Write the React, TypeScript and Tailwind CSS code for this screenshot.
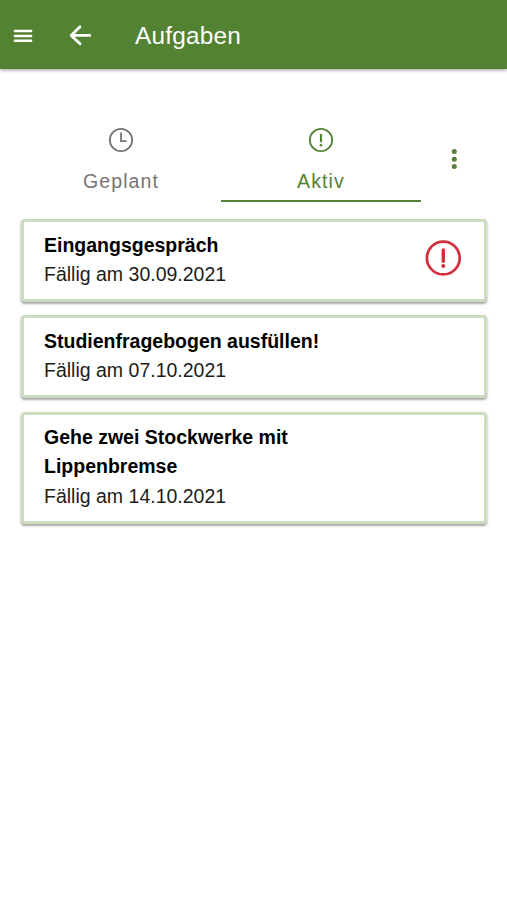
import React from 'react';
import clsx from 'clsx';

interface Task {
  id: number;
  title: string;
  due: string;
  urgent?: boolean;
}

const tasks: Task[] = [
  { id: 1, title: 'Eingangsgespräch', due: '30.09.2021', urgent: true },
  { id: 2, title: 'Studienfragebogen ausfüllen!', due: '07.10.2021' },
  { id: 3, title: 'Gehe zwei Stockwerke mit Lippenbremse', due: '14.10.2021' },
];

const MenuIcon = () => (
  <svg className="w-5 h-5" viewBox="0 0 20 20" stroke="currentColor" strokeWidth="2.5" strokeLinecap="round">
    <path d="M1.9 5.1h16.2M1.9 9.9h16.2M1.9 14.7h16.2" />
  </svg>
);

const BackIcon = () => (
  <svg className="w-6 h-6" viewBox="0 0 24 24" fill="none" stroke="currentColor" strokeWidth="2.8" strokeLinecap="round" strokeLinejoin="round">
    <path d="M21.8 11.4H3.2M12 2.8 3.2 11.4l8.8 8.4" />
  </svg>
);

const ClockIcon = () => (
  <svg className="w-[26px] h-[26px]" viewBox="0 0 26 26" fill="none" stroke="currentColor" strokeWidth="1.8">
    <circle cx="13" cy="13" r="11.2" />
    <path d="M13 5.4v8.8h5.7" />
  </svg>
);

const AlertIcon = () => (
  <svg className="w-[26px] h-[26px]" viewBox="0 0 26 26" fill="none" stroke="currentColor" strokeWidth="1.8">
    <circle cx="13" cy="13" r="11.2" />
    <path d="M13 7v8.2" strokeWidth="2.2" />
    <circle cx="13" cy="18.2" r="1.3" fill="currentColor" stroke="none" />
  </svg>
);

const UrgentIcon = () => (
  <svg className="w-9 h-9 text-[#d3303c]" viewBox="0 0 36 36" fill="none" stroke="currentColor" strokeWidth="2.7">
    <circle cx="18.3" cy="18" r="16.4" />
    <path d="M18.3 9.9v11.3" strokeWidth="3.4" strokeLinecap="round" />
    <circle cx="18.3" cy="26" r="2" fill="currentColor" stroke="none" />
  </svg>
);

const MoreIcon = () => (
  <svg className="w-5 h-5" viewBox="0 0 20 20" fill="currentColor">
    <circle cx="10.3" cy="2.6" r="2.5" />
    <circle cx="10.3" cy="10.2" r="2.5" />
    <circle cx="10.3" cy="17.5" r="2.5" />
  </svg>
);

interface TabProps {
  label: string;
  icon: React.ReactNode;
  active?: boolean;
}

const Tab: React.FC<TabProps> = ({ label, icon, active = false }) => (
  <button
    className={clsx(
      'w-[200px] h-[87px] pt-3 flex flex-col items-center border-b-2',
      active ? 'text-[#528233] border-[#528233]' : 'text-[#757575] border-transparent'
    )}
  >
    {icon}
    <span className="mt-[13px] text-[19.5px] leading-[30px] tracking-[1.1px]">{label}</span>
  </button>
);

const TaskCard: React.FC<{ task: Task }> = ({ task }) => (
  <div className="flex justify-between bg-white border-[3px] border-[#cbdcc1] rounded-[4px] pl-5 pr-[23px] pt-[8.5px] pb-[10px] shadow-[0_2px_2px_rgba(0,0,0,0.28),0_1px_4px_rgba(0,0,0,0.12)]">
    <div className="w-[300px] text-[19.5px] leading-[29.25px]">
      <h2 className="font-bold text-black">{task.title}</h2>
      <p className="text-[#1c1c1c]">Fällig am {task.due}</p>
    </div>
    {task.urgent && (
      <div className="pt-[9px]">
        <UrgentIcon />
      </div>
    )}
  </div>
);

const App: React.FC = () => {
  return (
    <div className="min-h-screen bg-white font-['Liberation_Sans',Arial,sans-serif]">
      <header className="h-[69px] flex items-center pl-[13px] pb-px pt-[3px] bg-[#538233] text-white shadow-[0_1px_4px_rgba(0,0,0,0.4)]">
        <MenuIcon />
        <div className="ml-[35px]">
          <BackIcon />
        </div>
        <h1 className="ml-[43px] text-[24.4px] leading-8 tracking-[0.18px]">Aufgaben</h1>
      </header>

      {/* Tabs */}
      <nav className="mt-[46px] pl-[21px] flex items-center">
        <Tab label="Geplant" icon={<ClockIcon />} />
        <Tab label="Aktiv" icon={<AlertIcon />} active />
        <button className="ml-[23px] text-[#528233]">
          <MoreIcon />
        </button>
      </nav>

      {/* Task list */}
      <main className="mt-[17px] ml-[21px] mr-5 flex flex-col gap-[13.25px]">
        {tasks.map((task) => (
          <TaskCard key={task.id} task={task} />
        ))}
      </main>
    </div>
  );
};

export default App;
